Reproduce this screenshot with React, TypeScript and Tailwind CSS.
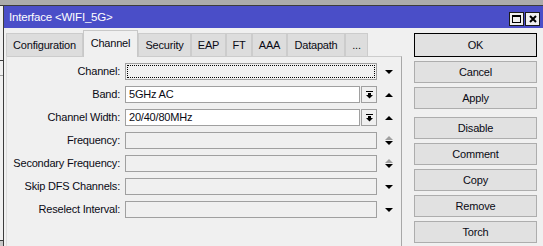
import React from 'react';

const tabs: { name: string; w: string }[] = [
  { name: 'Configuration', w: 'w-[77px]' },
  { name: 'Channel', w: 'w-[55px]' },
  { name: 'Security', w: 'w-[53px]' },
  { name: 'EAP', w: 'w-[35px]' },
  { name: 'FT', w: 'w-[26px]' },
  { name: 'AAA', w: 'w-[35px]' },
  { name: 'Datapath', w: 'w-[58px]' },
  { name: '...', w: 'w-[23px]' },
];

const Down = ({ color = '#000' }: { color?: string }) => (
  <svg width="8" height="4" viewBox="0 0 8 4">
    <polygon points="0,0 8,0 4,4" fill={color} />
  </svg>
);

const Up = ({ color = '#000' }: { color?: string }) => (
  <svg width="8" height="4" viewBox="0 0 8 4">
    <polygon points="0,4 8,4 4,0" fill={color} />
  </svg>
);

const UpDown = () => (
  <div className="flex flex-col items-center gap-[1px]">
    <Up color="#a0a0a0" />
    <Down />
  </div>
);

const SpinGlyph = () => (
  <svg width="7" height="8" viewBox="0 0 7 8">
    <rect x="0" y="0" width="7" height="1" fill="#000" />
    <rect x="2" y="2" width="3" height="2" fill="#000" />
    <polygon points="0,4 7,4 3.5,7.5" fill="#000" />
  </svg>
);

type Row = {
  label: string;
  value?: string;
  kind: 'focus' | 'combo' | 'disabled';
  arrow: 'down' | 'up' | 'updown';
};

const rows: Row[] = [
  { label: 'Channel:', kind: 'focus', arrow: 'down' },
  { label: 'Band:', value: '5GHz AC', kind: 'combo', arrow: 'up' },
  { label: 'Channel Width:', value: '20/40/80MHz', kind: 'combo', arrow: 'up' },
  { label: 'Frequency:', kind: 'disabled', arrow: 'updown' },
  { label: 'Secondary Frequency:', kind: 'disabled', arrow: 'updown' },
  { label: 'Skip DFS Channels:', kind: 'disabled', arrow: 'down' },
  { label: 'Reselect Interval:', kind: 'disabled', arrow: 'down' },
];

const buttons = ['OK', 'Cancel', 'Apply', 'Disable', 'Comment', 'Copy', 'Remove', 'Torch'];

export default function App() {
  return (
    <div className="w-[543px] h-[246px] overflow-hidden flex flex-col bg-[#f0f0f0] text-[11px] tracking-[-0.2px] text-[#0a0a14] font-['Liberation_Sans',Arial,sans-serif] leading-none">
      <div className="h-[6px] shrink-0 bg-[#ababab] border-b border-[#3c3c3c]" />
      <div className="flex flex-1 min-h-0">
        {/* window behind */}
        <div className="w-[3px] shrink-0 flex flex-col bg-[#f0f0f0]">
          <div className="h-[54px]" />
          <div className="h-px bg-[#3c3c3c]" />
          <div className="h-[14px]" />
          <div className="h-px bg-[#a0a0a0]" />
          <div className="h-[164px]" />
          <div className="h-px bg-[#3c3c3c]" />
          <div className="flex-1 bg-[#c8c8c8]" />
        </div>

        {/* dialog */}
        <div className="flex-1 flex flex-col border-l border-[#3c3c3c]">
          <div className="h-[22px] shrink-0 bg-[#4a4ec8] flex items-center pl-[5px] text-white text-[11.5px]">
            <span className="pt-[1px]">Interface &lt;WIFI_5G&gt;</span>
            <div className="ml-auto mr-[3px] mt-[3px] flex gap-[1px]">
              <div className="w-[15px] h-[14px] bg-[#f0f0f0] border border-[#1a1a1a] flex items-center justify-center">
                <div className="w-[9px] h-[8px] border border-black border-t-2" />
              </div>
              <div className="w-[15px] h-[14px] bg-[#f0f0f0] border border-[#1a1a1a] flex items-center justify-center">
                <svg width="8" height="8" viewBox="0 0 8 8">
                  <path d="M1 1 L7 7 M7 1 L1 7" stroke="#000" strokeWidth="2" />
                </svg>
              </div>
            </div>
          </div>

          <div className="flex flex-1 min-h-0">
            <div className="w-[398px] shrink-0 flex flex-col pl-[2px] pt-[2px]">
              <div className="flex items-end h-[26px] shrink-0">
                {tabs.map((t) =>
                  t.name === 'Channel' ? (
                    <div
                      key={t.name}
                      className={`${t.w} h-[27px] -mb-px relative bg-[#f0f0f0] border border-b-0 border-[#c8c8c8] flex items-center justify-center pb-[2px]`}
                    >
                      {t.name}
                    </div>
                  ) : (
                    <div
                      key={t.name}
                      className={`${t.w} h-[23px] bg-[#dddddd] border border-b-0 border-[#cccccc] flex items-center justify-center`}
                    >
                      {t.name}
                    </div>
                  )
                )}
              </div>
              <div className="flex-1 border-t border-l border-r border-t-[#cccccc] border-l-[#dcdcdc] border-r-[#a8a8a8] pt-[6px] flex flex-col gap-[6px]">
                {rows.map((r) => (
                  <div key={r.label} className="flex items-center h-[17px]">
                    <div className="w-[113px] text-right">{r.label}</div>
                    <div className="w-[5px]" />
                    {r.kind === 'combo' ? (
                      <>
                        <div className="w-[235px] h-[17px] bg-white border border-[#a0a0a0] flex items-center pl-[3px]">
                          {r.value}
                        </div>
                        <div className="ml-[1px] w-[16px] h-[17px] border border-[#a0a0a0] bg-[#f0f0f0] flex items-center justify-center">
                          <SpinGlyph />
                        </div>
                      </>
                    ) : r.kind === 'focus' ? (
                      <div className="w-[252px] h-[17px] border border-[#a0a0a0] bg-[#f0f0f0] p-[1px]">
                        <div className="w-full h-full border border-dotted border-black" />
                      </div>
                    ) : (
                      <div className="w-[252px] h-[17px] border border-[#a0a0a0] bg-[#f0f0f0]" />
                    )}
                    <div className="w-[23px] flex items-center justify-center">
                      {r.arrow === 'down' ? <Down /> : r.arrow === 'up' ? <Up /> : <UpDown />}
                    </div>
                  </div>
                ))}
              </div>
            </div>

            <div className="ml-[12px] w-[123px] shrink-0 pt-[5px] flex flex-col">
              {buttons.map((b, i) => (
                <div
                  key={b}
                  className={`flex items-center justify-center bg-[#e1e1e1] border ${
                    i === 0 ? 'h-[24px] border-black' : 'h-[22px] border-[#adadad]'
                  } ${i === 0 ? '' : i === 3 ? 'mt-[8px]' : 'mt-[4px]'}`}
                >
                  {b}
                </div>
              ))}
            </div>
          </div>
        </div>
      </div>
    </div>
  );
}
